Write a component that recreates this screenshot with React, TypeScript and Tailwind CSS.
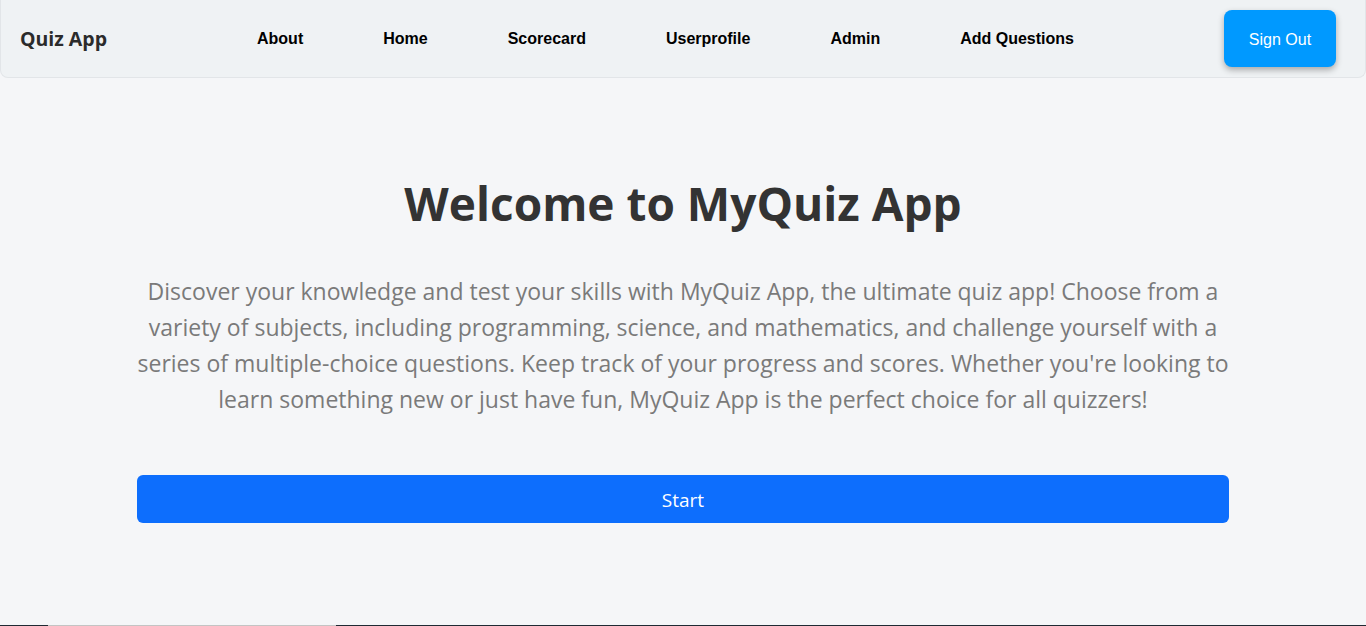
const links = ["About", "Home", "Scorecard", "Userprofile", "Admin", "Add Questions"];

function Navbar() {
  return (
    <nav className="flex h-[78px] items-center rounded-b-lg border border-t-0 border-[#e2e5e8] bg-[#eff2f4] pl-[19px] pr-[29px]">
      <span className="font-['Open_Sans',sans-serif] text-[19.5px] font-bold text-[#2b2b2b]">Quiz App</span>
      <ul className="ml-[150px] flex gap-20 font-['Liberation_Sans',Arial,sans-serif] text-[16px] font-bold text-black">
        {links.map((link) => (
          <li key={link}>
            <a href="#">{link}</a>
          </li>
        ))}
      </ul>
      <button className="ml-auto mt-[-1px] h-[57px] w-[112px] rounded-lg bg-[#0099ff] pt-[3px] font-['Liberation_Sans',Arial,sans-serif] text-[16px] text-white shadow-[0_3px_6px_rgba(0,0,0,0.3)]">
        Sign Out
      </button>
    </nav>
  );
}

export default function App() {
  return (
    <div className="min-h-screen bg-[#f5f6f8] font-['Open_Sans',sans-serif]">
      <div className="flex h-[625px] flex-col">
        <Navbar />
        <main className="mx-[137px] flex flex-col items-center pt-[93px]">
          <h1 className="text-[46px] font-bold leading-[64px] text-[#333]">Welcome to MyQuiz App</h1>
          <p className="mt-[38px] text-center text-[23px] leading-[36px] text-[#7a7a7a]">
            Discover your knowledge and test your skills with MyQuiz App, the ultimate quiz app! Choose from a
            variety of subjects, including programming, science, and mathematics, and challenge yourself with a
            series of multiple-choice questions. Keep track of your progress and scores. Whether you're looking to
            learn something new or just have fun, MyQuiz App is the perfect choice for all quizzers!
          </p>
          <button className="mt-[58px] h-[48px] w-full rounded-md bg-[#0d6efd] pt-[2px] text-[19px] text-white">Start</button>
        </main>
      </div>
      <footer className="flex h-px">
        <div className="w-12 bg-[#1f2a33]" />
        <div className="w-[288px] bg-[#c4c4c4]" />
        <div className="flex-1 bg-[#1f2a33]" />
      </footer>
    </div>
  );
}
